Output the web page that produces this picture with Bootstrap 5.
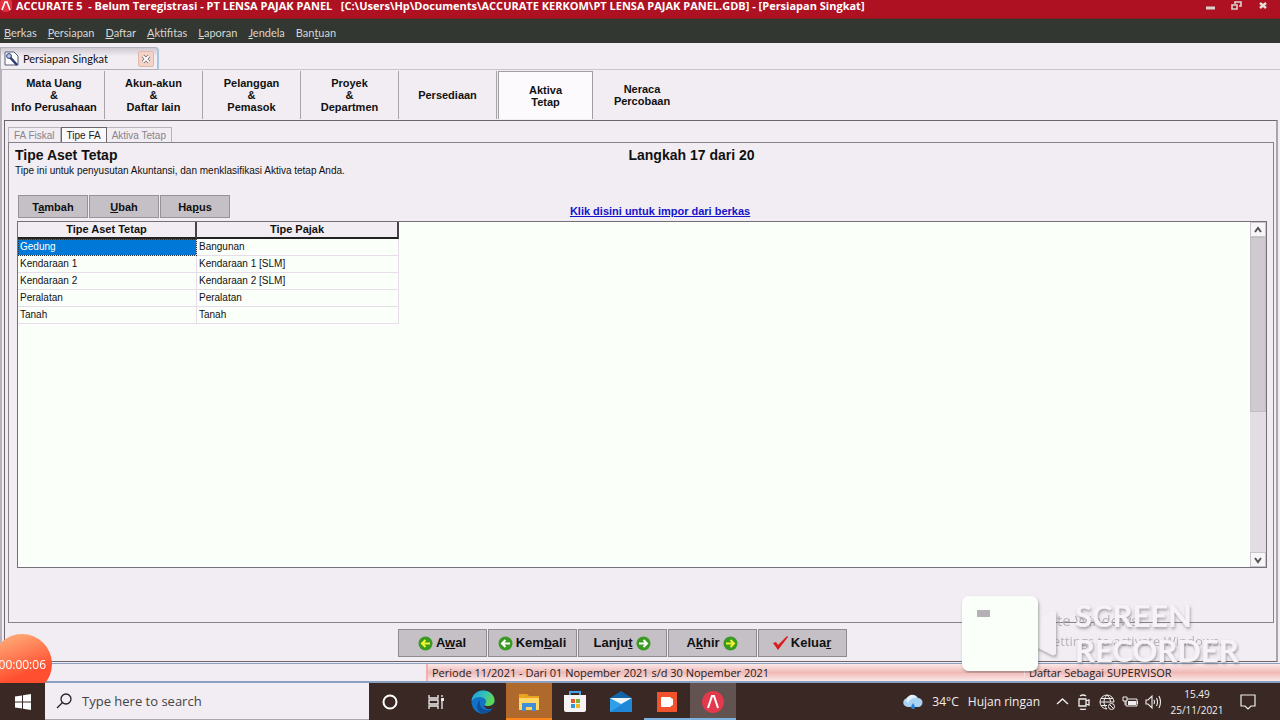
<!DOCTYPE html>
<html lang="id">
<head>
<meta charset="utf-8">
<meta name="viewport" content="width=device-width, initial-scale=1">
<title>ACCURATE 5 - Persiapan Singkat</title>
<link href="https://cdn.jsdelivr.net/npm/bootstrap@5.3.0/dist/css/bootstrap.min.css" rel="stylesheet">
<style>
  :root { --face: #f2edf3; --line: #6b666b; --btn-face: #c5c0c6; }
  body { font: 10px/14px "Liberation Sans", sans-serif; color: #111; background: var(--face); }
  button { border: 0; border-radius: 0; background: none; padding: 0; color: inherit; }
  svg { display: block; flex: none; }
  .segoe { font-family: "Open Sans", "Noto Sans", sans-serif; }
  .segoe-narrow { font-family: Lato, "Open Sans", sans-serif; }

  .title-bar { height: 19px; background: #ae1122; color: #fff; font-size: 11px; line-height: 12px; border-bottom: 1px solid #851a22; }
  .title-bar .caption { white-space: pre; }
  .menu-bar { height: 24px; background: #333732; font-size: 11px; line-height: 28px; padding-left: 4px; gap: 11px; }
  .menu-bar a { color: #d6d6d2; text-decoration: none; }

  .doc-tabs { height: 27px; border-bottom: 1px solid #c9c4ca; padding-top: 4px; }
  .doc-tab { width: 159px; height: 23px; border: 1px solid #b4b0b8; border-right: 2px solid #a9c6dc; border-radius: 0 4px 0 0; background: linear-gradient(#cfcad1, #f2edf3 40%); padding: 0 3px 0 3px; font-size: 11px; }
  .tab-close { width: 16px; height: 16px; background: #f4d2c8; border: 1px solid #e3b9ae; border-radius: 2px; }

  .work-frame { border-left: 2px solid #b8b3ba; padding: 0 2px 1px 2px; }
  .step-bar button { width: 98px; height: 48px; margin-top: 1px; font-weight: 700; font-size: 11px; line-height: 12px; border-right: 1px solid #a9a4aa; }
  .step-bar button:first-child { width: 101px; }
  .step-bar button:last-child { border-right: 0; }
  .step-bar button.current { margin-left: 1px; width: 95px; background: #fcfafd; border: 1px solid #a29da4; border-bottom: 0; }
  .outer-panel { border: 1px solid var(--line); border-right: 2px solid #aaa5ab; padding: 6px 2px 4px 3px; margin-top: 1px; }
  .sub-tabs button { height: 15px; border: 1px solid #b9b4ba; border-bottom: 0; color: #88838a; padding: 0 5px; line-height: 15px; }
  .sub-tabs button + button { border-left: 0; }
  .sub-tabs button.current { border: 1px solid var(--line); border-bottom: 0; background: #fbf8fc; color: #222; }
  .inner-panel { border: 1px solid #878289; padding: 4px 6px 54px 6px; }
  .page-title { font: 700 14px/16px "Liberation Sans", sans-serif; }
  .title-cell { flex: 0 0 49%; }
  .page-note { line-height: 16px; }
  .tool-set { flex: 0 0 44%; gap: 1px; padding-left: 3px; }
  .tool-btn { background: var(--btn-face); border: 1px solid #98939a; height: 23px; width: 70px; font-weight: 700; font-size: 11px; }
  .import-link { color: #1414c8; font-weight: 700; font-size: 11px; }

  .grid-box { border: 1px solid #757077; background: #fafffa; margin: 3px 0 0 2px; }
  .asset-grid { width: 381px; table-layout: fixed; border-collapse: separate; border-spacing: 0; align-self: flex-start; }
  .asset-grid th { height: 17px; padding: 0; text-align: center; font-size: 11px; line-height: 15px; background: var(--face); border-bottom: 2px solid #222; border-right: 2px solid #444; }
  .asset-grid td { height: 17px; padding: 0 2px; line-height: 16px; border-bottom: 1px solid #e6dde8; border-right: 1px solid #e6dde8; }
  .asset-grid td.picked { background: #0078d7; color: #fff; outline: 1px dotted #333; outline-offset: -1px; }
  .scroll-rail { width: 16px; background: #e2dde3; }
  .scroll-rail button { height: 15px; background: #f8f5f9; border: 1px solid #c9c4ca; }
  .scroll-thumb { height: 175px; background: #cfcad0; border: 1px solid #c2bdc3; }

  .wizard-bar { gap: 1px; padding: 6px 38px 0 0; }
  .wizard-bar button { width: 89px; height: 28px; gap: 3px; background: var(--btn-face); border: 1px solid #8f8a91; font-weight: 700; font-size: 13px; }

  .status-bar { height: 20px; border-top: 1px solid #8aa0c0; border-bottom: 2px solid #8aa0c0; font-size: 11px; line-height: 18px; color: #222; }
  .status-red { background: linear-gradient(#fbe8e8, #f0b9b6 50%, #fbe9e9); }
  .status-role { flex: 0 0 20%; padding-left: 4px; border-left: 1px solid #f6dcdc; }
  .status-blank { flex: 0 0 428px; border-right: 2px solid #efb0b0; }

  .task-bar { height: 37px; background: #3a2824; color: #f2eeee; }
  .start-btn { width: 45px; }
  .search-box { width: 324px; background: var(--face); gap: 10px; padding-left: 11px; border-bottom: 1px solid #aaa; }
  .search-box input { border: 0; background: none; outline: 0; width: 240px; font-size: 13px; line-height: 20px; padding: 0; color: #444; }
  .search-box input::placeholder { color: #444; opacity: 1; }
  .task-bar .app { width: 46px; }
  .task-bar .app.cortana { width: 42px; }
  .task-bar .app.task-view { width: 49px; }
  .app.explorer { background: #b0692c; box-shadow: inset 0 -2px #ff8417; }
  .app.running { box-shadow: inset 0 -2px #7db2e0; }
  .app.front { background: #625250; }
  .weather { font-size: 12px; line-height: 18px; gap: 9px; }
  .tray { gap: 7px; }
  .clock { font-size: 10px; line-height: 16px; width: 54px; }

  .rec-timer { position: fixed; left: -8px; bottom: 37px; width: 60px; height: 49px; overflow: hidden; }
  .rec-face { height: 60px; border-radius: 50%; background: linear-gradient(160deg, #ffa070 15%, #ff4f30 65%); color: #fff; font-size: 12px; line-height: 62px; text-align: right; padding-right: 6px; }
  .rec-mark { position: fixed; right: 40px; bottom: 47px; width: 280px; height: 78px; }
</style>
</head>
<body class="d-flex flex-column min-vh-100">

<header>
  <div class="title-bar segoe d-flex align-items-start fw-bold">
    <svg width="12" height="13" viewBox="0 0 12 13"><circle cx="6" cy="5" r="7" fill="#e2313f"/><path d="M2 10 5 2h2l3 8" fill="none" stroke="#fff" stroke-width="1.6"/></svg>
    <span class="caption flex-grow-1 ps-1">ACCURATE 5  - Belum Teregistrasi - PT LENSA PAJAK PANEL   [C:\Users\Hp\Documents\ACCURATE KERKOM\PT LENSA PAJAK PANEL.GDB] - [Persiapan Singkat]</span>
    <div class="d-flex gap-3 pe-2 me-1">
      <button aria-label="Minimize"><svg width="10" height="11"><path d="M1 8h9" stroke="#d9d5d0" stroke-width="3"/></svg></button>
      <button aria-label="Restore"><svg width="11" height="11"><path d="M4 4V2h6v4H8M1 5h5v4H1z" fill="none" stroke="#d9d5d0" stroke-width="1.6"/></svg></button>
      <button aria-label="Close"><svg width="10" height="11"><path d="m2 3 6 5m0-5-6 5" stroke="#e4e0db" stroke-width="2.4"/></svg></button>
    </div>
  </div>
  <nav class="menu-bar segoe-narrow d-flex">
    <a href="#"><u>B</u>erkas</a><a href="#"><u>P</u>ersiapan</a><a href="#"><u>D</u>aftar</a><a href="#"><u>A</u>ktifitas</a><a href="#"><u>L</u>aporan</a><a href="#"><u>J</u>endela</a><a href="#">Ban<u>t</u>uan</a>
  </nav>
</header>

<div class="doc-tabs">
  <div class="doc-tab segoe-narrow d-flex align-items-center">
    <svg width="15" height="15" viewBox="0 0 15 15"><path d="M1 1h9l4 4v9H1z" fill="#fff" stroke="#555c70"/><path d="m4 4 9 10" stroke="#2c3d78" stroke-width="2.6"/><circle cx="5" cy="5" r="2.4" fill="#b8c8e8" stroke="#2c3d78"/></svg>
    <span class="flex-grow-1 ps-1">Persiapan Singkat</span>
    <button class="tab-close d-flex align-items-center justify-content-center" aria-label="Tutup"><svg width="10" height="10"><path d="m2 2 6 6m0-6-6 6" stroke="#7b6f6c" stroke-width="3.4"/><path d="m2 2 6 6m0-6-6 6" stroke="#fff" stroke-width="1.8"/></svg></button>
  </div>
</div>

<main class="work-frame flex-grow-1 d-flex flex-column">
  <nav class="step-bar d-flex">
    <button>Mata Uang<br>&amp;<br>Info Perusahaan</button>
    <button>Akun-akun<br>&amp;<br>Daftar lain</button>
    <button>Pelanggan<br>&amp;<br>Pemasok</button>
    <button>Proyek<br>&amp;<br>Departmen</button>
    <button>Persediaan</button>
    <button class="current">Aktiva<br>Tetap</button>
    <button>Neraca<br>Percobaan</button>
  </nav>

  <section class="outer-panel flex-grow-1 d-flex flex-column">
    <div class="sub-tabs d-flex">
      <button>FA Fiskal</button><button class="current">Tipe FA</button><button>Aktiva Tetap</button>
    </div>
    <div class="inner-panel flex-grow-1 d-flex flex-column">
      <div class="d-flex">
        <h1 class="page-title title-cell m-0">Tipe Aset Tetap</h1>
        <div class="page-title">Langkah 17 dari 20</div>
      </div>
      <p class="page-note m-0">Tipe ini untuk penyusutan Akuntansi, dan menklasifikasi Aktiva tetap Anda.</p>
      <div class="d-flex pt-3 align-items-end">
        <div class="tool-set d-flex">
          <button class="tool-btn">T<u>a</u>mbah</button><button class="tool-btn"><u>U</u>bah</button><button class="tool-btn">Ha<u>p</u>us</button>
        </div>
        <a class="import-link ps-1" href="#">Klik disini untuk impor dari berkas</a>
      </div>
      <div class="grid-box flex-grow-1 d-flex justify-content-between">
        <table class="asset-grid">
          <colgroup><col style="width:179px"><col></colgroup>
          <thead><tr><th>Tipe Aset Tetap</th><th>Tipe Pajak</th></tr></thead>
          <tbody>
            <tr><td class="picked">Gedung</td><td>Bangunan</td></tr>
            <tr><td>Kendaraan 1</td><td>Kendaraan 1 [SLM]</td></tr>
            <tr><td>Kendaraan 2</td><td>Kendaraan 2 [SLM]</td></tr>
            <tr><td>Peralatan</td><td>Peralatan</td></tr>
            <tr><td>Tanah</td><td>Tanah</td></tr>
          </tbody>
        </table>
        <div class="scroll-rail d-flex flex-column">
          <button class="d-flex align-items-center justify-content-center" aria-label="Gulir ke atas"><svg width="8" height="8"><path d="m1 6 3-4 3 4" fill="none" stroke="#555" stroke-width="2"/></svg></button>
          <div class="scroll-thumb"></div>
          <button class="d-flex align-items-center justify-content-center mt-auto" aria-label="Gulir ke bawah"><svg width="8" height="8"><path d="m1 2 3 4 3-4" fill="none" stroke="#555" stroke-width="2"/></svg></button>
        </div>
      </div>
    </div>
    <div class="wizard-bar d-flex justify-content-center">
      <button class="d-flex align-items-center justify-content-center"><svg width="15" height="15" viewBox="0 0 15 15"><circle cx="7.500" cy="7.500" r="7" fill="#3a9a22"/><path d="M12 7.500H4M7.500 4 4 7.500 7.500 11" fill="none" stroke="#f4f032" stroke-width="2"/></svg><span>A<u>w</u>al</span></button>
      <button class="d-flex align-items-center justify-content-center"><svg width="15" height="15" viewBox="0 0 15 15"><circle cx="7.500" cy="7.500" r="7" fill="#3a9a22"/><path d="M12 7.500H4M7.500 4 4 7.500 7.500 11" fill="none" stroke="#fff" stroke-width="2"/></svg><span>Kem<u>b</u>ali</span></button>
      <button class="d-flex align-items-center justify-content-center"><span>Lanju<u>t</u></span><svg width="15" height="15" viewBox="0 0 15 15"><circle cx="7.500" cy="7.500" r="7" fill="#3a9a22"/><path d="M3 7.500h8M7.500 4 11 7.500 7.500 11" fill="none" stroke="#fff" stroke-width="2"/></svg></button>
      <button class="d-flex align-items-center justify-content-center"><span>A<u>k</u>hir</span><svg width="15" height="15" viewBox="0 0 15 15"><circle cx="7.500" cy="7.500" r="7" fill="#3a9a22"/><path d="M3 7.500h8M7.500 4 11 7.500 7.500 11" fill="none" stroke="#f4f032" stroke-width="2"/></svg></button>
      <button class="d-flex align-items-center justify-content-center"><svg width="15" height="15" viewBox="0 0 15 15"><path d="m0 7 3-1 2 3 9-9 1 1L5 14z" fill="#d81e1e"/></svg><span>Kelua<u>r</u></span></button>
    </div>
  </section>
</main>

<div class="status-bar segoe d-flex">
  <div class="status-blank"></div>
  <div class="status-red flex-grow-1 ps-1">Periode 11/2021 - Dari 01 Nopember 2021 s/d 30 Nopember 2021</div>
  <div class="status-red status-role">Daftar Sebagai SUPERVISOR</div>
</div>

<footer class="task-bar segoe d-flex">
  <button class="start-btn d-flex align-items-center justify-content-center" aria-label="Start"><svg width="16" height="16" viewBox="0 0 16 16"><path d="M0 2.500 7 1.500V7.500H0zM8 1.300 16 0v7.500H8zM0 8.500h7v6L0 13.500zM8 8.500h8V16L8 14.700z" fill="#fff"/></svg></button>
  <label class="search-box d-flex align-items-center"><svg width="16" height="16" viewBox="0 0 16 16"><circle cx="10" cy="6" r="5" fill="none" stroke="#222" stroke-width="1.300"/><path d="M6.500 9.500 1 15" stroke="#222" stroke-width="1.300"/></svg><input type="text" placeholder="Type here to search" aria-label="Type here to search"></label>
  <button class="app cortana d-flex align-items-center justify-content-center" aria-label="Cortana"><svg width="16" height="16"><circle cx="8" cy="8" r="6.500" fill="none" stroke="#fff" stroke-width="2"/></svg></button>
  <button class="app task-view d-flex align-items-center justify-content-center" aria-label="Task View"><svg width="16" height="16"><path d="M1 1v3h9V1M1 15v-3h9v3M1 6h9v4H1zM14 1v2m0 3v9" fill="none" stroke="#eee" stroke-width="1.300"/><rect x="13" y="4" width="3" height="3" fill="#eee"/></svg></button>
  <button class="app d-flex align-items-center justify-content-center" aria-label="Edge"><svg width="24" height="24" viewBox="0 0 24 24"><defs><linearGradient id="eg" x1="0" y1="0" x2="1" y2=".4"><stop offset="0" stop-color="#1b9de2"/><stop offset=".6" stop-color="#35c1b5"/><stop offset="1" stop-color="#62d84e"/></linearGradient></defs><circle cx="12" cy="12" r="11.500" fill="#1472c4"/><path d="M.6 11C1 5 6 .5 12 .5c7 0 11.500 5 11.500 9.500 0 4-3 6-6.500 6-3 0-4-1-3-2 1.500-1.500 1.500-4-.5-5.500C10 6 4 6.500.6 11z" fill="url(#eg)"/><path d="M9 10c-2 7 4 12 12 9-2 3-6 4.700-10 4.200C6 22 4 14 9 10z" fill="#0d4f9c"/><path d="M13 14c-1 1 0 2.300 3 2.300 3 0 6-1 7.500-4 0 3-1 5-2.500 6.500-5 1-9-1-8-4.800z" fill="#3a2824"/></svg></button>
  <button class="app explorer d-flex align-items-center justify-content-center" aria-label="File Explorer"><svg width="22" height="20" viewBox="0 0 22 20"><path d="M1 2h8l2 2h10v14H1z" fill="#e9a51f"/><path d="M1 6h20v12H1z" fill="#ffd768"/><path d="M4 19v-8h14v8h-4v-4H8v4z" fill="#3f8fd8"/></svg></button>
  <button class="app d-flex align-items-center justify-content-center" aria-label="Store"><svg width="22" height="22" viewBox="0 0 22 22"><path d="M6 5V1h10v4" fill="none" stroke="#46a3e4" stroke-width="2"/><path d="M0 4h22v15a2 2 0 0 1-2 2H2a2 2 0 0 1-2-2z" fill="#f5f3f4"/><path d="M7 8h4v4H7z" fill="#e8572c"/><path d="M12 8h4v4h-4z" fill="#7bb52c"/><path d="M7 13h4v4H7z" fill="#2a9be0"/><path d="M12 13h4v4h-4z" fill="#f5b420"/></svg></button>
  <button class="app d-flex align-items-center justify-content-center" aria-label="Mail"><svg width="24" height="22" viewBox="0 0 24 22"><path d="M1 7 12 0l11 7z" fill="#1464a8"/><path d="M1 7h22v14H1z" fill="#2f9fea"/><path d="M1 7h22l-11 6z" fill="#eef6fc"/><path d="m1 21 22-14v14z" fill="#1f86d8"/></svg></button>
  <button class="app running d-flex align-items-center justify-content-center" aria-label="Screen Recorder"><svg width="20" height="20"><path d="M0 0h20v20H0z" fill="#f0522b"/><path d="M5 5h8q1 0 1 1l2 1v6l-2 1q0 1-1 1H5q-1 0-1-1V6q0-1 1-1z" fill="#fff"/></svg></button>
  <button class="app running front d-flex align-items-center justify-content-center" aria-label="Accurate"><svg width="22" height="22" viewBox="0 0 22 22"><circle cx="11" cy="11" r="11" fill="#e23a4c"/><path d="M6 17 10 5h2l4 12" fill="none" stroke="#fff" stroke-width="2"/></svg></button>

  <div class="ms-auto d-flex align-items-center">
    <div class="weather d-flex align-items-center me-3">
      <svg width="20" height="18" viewBox="0 0 20 18"><path d="M5 14a4.500 4.500 0 0 1-.5-9A6 6 0 0 1 15 5a4.500 4.500 0 0 1 0 9z" fill="#a9d3f5"/><path d="M5 10a4 4 0 0 1 1-7 5 5 0 0 1 8 2 8 8 0 0 0-9 5z" fill="#e2f1fd"/><path d="M10 10c3 4 2 6 0 6s-3-2 0-6z" fill="#2b7fd4"/></svg>
      <span>34°C</span><span>Hujan ringan</span>
    </div>
    <div class="tray d-flex align-items-center">
      <svg width="13" height="16"><path d="m1 10 5.500-5L12 10" fill="none" stroke="#eee" stroke-width="1.400"/></svg>
      <svg width="16" height="16"><path d="M3 5h7v7H3zM10 7l3-1v5l-3-1M4 2q3-2 6 0M4 15q3 1 6 0" fill="none" stroke="#eee" stroke-width="1.300"/></svg>
      <svg width="16" height="16"><path d="M8 1a7 7 0 1 0 0 14M8 1a7 7 0 0 1 7 7M8 1C4 5 4 11 8 15M8 1q4 3 3.500 7M1 8h14M2 4.500h12M2 11.500h6" fill="none" stroke="#eee"/><circle cx="12.500" cy="12.500" r="3" fill="none" stroke="#eee"/><path d="m10.500 10.500 4 4" stroke="#eee"/></svg>
      <svg width="16" height="16"><path d="M4 5h11v7H4z" fill="none" stroke="#eee"/><path d="M6 7h8v4H6zM15 7h1v3h-1z" fill="#eee"/><path d="M1 3h4v4H1zM3 7v4" fill="#3a2824" stroke="#eee"/></svg>
      <svg width="17" height="16"><path d="M1 6h2l4-4v12l-4-4H1zM9 6q1 2 0 4M11.500 4q2 4 0 8M14 2q3 6 0 12" fill="none" stroke="#eee" stroke-width="1.100"/></svg>
    </div>
    <div class="clock text-center ms-2">15.49<br>25/11/2021</div>
    <button class="px-3 me-2" aria-label="Notifikasi"><svg width="16" height="16"><path d="M1 1h14v11h-4l-3 3-3-3H1z" fill="none" stroke="#eee" stroke-width="1.200"/></svg></button>
  </div>
</footer>

<div class="rec-timer segoe"><div class="rec-face">00:00:06</div></div>
<svg class="rec-mark segoe" viewBox="0 0 280 78">
  <defs><filter id="sh" x="-20%" y="-20%" width="140%" height="150%"><feDropShadow dx="1" dy="2" stdDeviation="1.500" flood-color="#555" flood-opacity=".5"/></filter></defs>
  <g fill="#b9b4ba"><text x="97" y="31" font-size="15">te Windows</text><text x="93" y="51" font-size="13">ettings to activate Windows.</text></g>
  <path d="M76 25 92 16q4-1 4 3v38q0 4-4 3l-16-8z" fill="#f3eff4" filter="url(#sh)"/>
  <rect x="2" y="1" width="76" height="75" rx="7" fill="#fafffa" filter="url(#sh)"/>
  <path d="M17 15h13v7H17z" fill="#b5b0b6"/>
  <g fill="#f6f2f7" font-weight="700" font-size="31" font-family="Lato, sans-serif" filter="url(#sh)"><text x="115" y="32">SCREEN</text><text x="115" y="67">RECORDER</text></g>
</svg>
<script src="https://cdn.jsdelivr.net/npm/bootstrap@5.3.0/dist/js/bootstrap.bundle.min.js"></script>
</body>
</html>
